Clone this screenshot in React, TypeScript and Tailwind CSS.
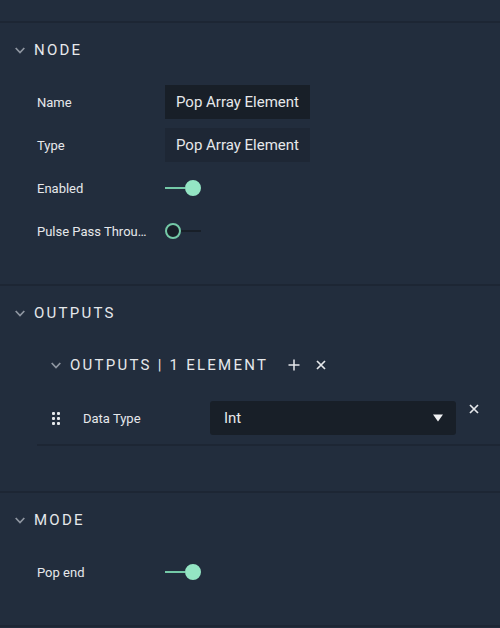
import { useId, useState, type ReactNode } from "react";

function Chevron() {
  return (
    <svg width="10" height="7" viewBox="0 0 10 7" fill="none" stroke="#8f96a1" strokeWidth="1.7" aria-hidden="true">
      <path d="M0.7 1 5 5.6 9.3 1" />
    </svg>
  );
}

function Cross() {
  return (
    <svg width="10" height="10" viewBox="0 0 10 10" fill="none" stroke="#e6e8eb" strokeWidth="1.7" aria-hidden="true">
      <path d="M1 1 9 9M9 1 1 9" />
    </svg>
  );
}

function Section({ title, children }: { title: string; children: ReactNode }) {
  const [open, setOpen] = useState(true);
  return (
    <section className="border-t-2 border-[#1d2634] pb-9">
      <h2>
        <button
          type="button"
          aria-expanded={open}
          onClick={() => setOpen(!open)}
          className="flex h-[54px] w-full items-center gap-[9px] pl-[15px] text-[15px] tracking-[0.15em]"
        >
          <Chevron />
          {title}
        </button>
      </h2>
      {open && <div className="pt-2">{children}</div>}
    </section>
  );
}

function Row({ label, id, children }: { label: string; id: string; children: ReactNode }) {
  return (
    <div className="flex h-[34px] items-center pl-[37px]">
      <label htmlFor={id} className="mr-4 w-28 shrink-0 whitespace-nowrap text-[13px] leading-[21px]">
        {label}
      </label>
      {children}
    </div>
  );
}

function TextRow({ label, value, readOnly = false }: { label: string; value: string; readOnly?: boolean }) {
  const id = useId();
  return (
    <Row label={label} id={id}>
      <input
        id={id}
        type="text"
        defaultValue={value}
        readOnly={readOnly}
        className="h-full w-[145px] bg-[#181f28] pl-[11px] text-[15px] outline-none read-only:bg-[#1e2735]"
      />
    </Row>
  );
}

function ToggleRow({ label, on = false }: { label: string; on?: boolean }) {
  const id = useId();
  return (
    <Row label={label} id={id}>
      <input
        id={id}
        type="checkbox"
        role="switch"
        defaultChecked={on}
        className="flex h-4 w-9 appearance-none items-center before:h-4 before:w-4 before:shrink-0 before:rounded-full before:border-2 before:border-[#74c9a7] before:bg-[#181f28] after:h-[2px] after:flex-1 after:bg-[#181f28] checked:flex-row-reverse checked:before:border-[#94e5c4] checked:before:bg-[#94e5c4] checked:after:bg-[#74c9a7]"
      />
    </Row>
  );
}

function DragHandle() {
  return (
    <svg width="9" height="13" viewBox="0 0 9 13" fill="#e6e8eb" aria-hidden="true">
      {[0, 5, 10].map((y) => (
        <g key={y}>
          <rect x="1" y={y} width="3" height="3" rx="1" />
          <rect x="6" y={y} width="3" height="3" rx="1" />
        </g>
      ))}
    </svg>
  );
}

export default function App() {
  return (
    <main className="min-h-screen bg-[#222d3d] pt-[21px] font-[Roboto,sans-serif] text-[#e6e8eb]">
      <Section title="NODE">
        <div className="flex flex-col gap-[9px]">
          <TextRow label="Name" value="Pop Array Element" />
          <TextRow label="Type" value="Pop Array Element" readOnly />
          <ToggleRow label="Enabled" on />
          <ToggleRow label="Pulse Pass Throu…" />
        </div>
      </Section>

      <Section title="OUTPUTS">
        <div className="flex h-[34px] items-center pl-[51px]">
          <button type="button" className="flex items-center gap-[9px] text-[15px] tracking-[0.15em]">
            <Chevron />
            OUTPUTS | 1 ELEMENT
          </button>
          <button type="button" aria-label="Add element" className="ml-5">
            <svg width="12" height="12" viewBox="0 0 12 12" fill="none" stroke="#e6e8eb" strokeWidth="1.5" aria-hidden="true">
              <path d="M6 0.5V11.5M0.5 6H11.5" />
            </svg>
          </button>
          <button type="button" aria-label="Remove all" className="ml-4">
            <Cross />
          </button>
        </div>
        <div className="mt-[19px] ml-[37px] flex border-b-2 border-[#1d2634] pb-[9px]">
          <button type="button" aria-label="Reorder" className="ml-[14px]">
            <DragHandle />
          </button>
          <label htmlFor="data-type" className="ml-[23px] w-[127px] shrink-0 self-center text-[13px] leading-[21px]">
            Data Type
          </label>
          <div className="relative h-[34px] flex-1">
            <select
              id="data-type"
              className="h-full w-full appearance-none rounded-[3px] bg-[#181f28] px-[14px] text-[15px] outline-none"
            >
              <option>Int</option>
            </select>
            <svg
              width="10"
              height="8"
              viewBox="0 0 10 8"
              fill="#f0f1f3"
              aria-hidden="true"
              className="pointer-events-none absolute top-[13px] right-[13px]"
            >
              <path d="M0 0.5H10L5 7.5Z" />
            </svg>
          </div>
          <button type="button" aria-label="Remove element" className="mt-[3px] mr-[21px] ml-[13px] self-start">
            <Cross />
          </button>
        </div>
        <div className="h-[9px]" />
      </Section>

      <Section title="MODE">
        <ToggleRow label="Pop end" on />
      </Section>
      <hr className="border-t-2 border-[#1d2634]" />
    </main>
  );
}
